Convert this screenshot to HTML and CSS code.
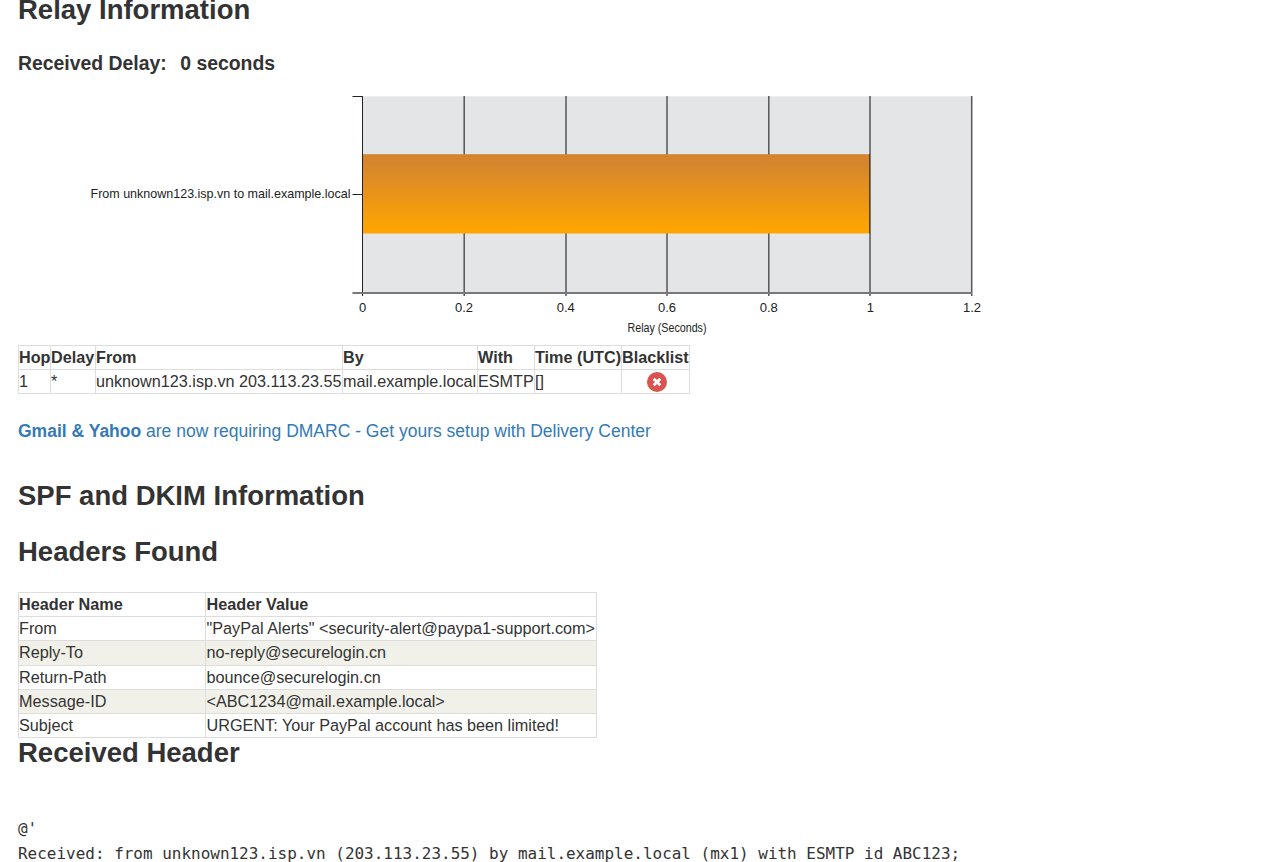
FILE: index.html
```html
<!DOCTYPE html>
<html lang="en">
<head>
<meta charset="utf-8">
<title>Header Analyzed</title>
<link rel="stylesheet" href="styles.css">
</head>
<body>
<main class="report">
  <h2 class="title title-relay">Relay Information</h2>
  <h4 class="delay"><span>Received Delay:</span><span>0 seconds</span></h4>

  <svg class="chart" width="920" height="257" viewBox="80 88 920 257" role="img" aria-label="Relay delay per hop">
    <defs>
      <linearGradient id="bar" x1="0" y1="0" x2="0" y2="1">
        <stop offset="0" stop-color="#d58330"/>
        <stop offset="0.15" stop-color="#d7862c"/>
        <stop offset="0.9" stop-color="#fca304"/>
        <stop offset="1" stop-color="#ffa500"/>
      </linearGradient>
    </defs>
    <rect x="363" y="96.300" width="609" height="196.700" fill="#e4e5e7"/>
    <g class="grid">
      <path d="M464.200 96v200M566 96v200M667 96v200M768.800 96v200M870 96v200M971.700 96v200"/>
    </g>
    <rect x="363" y="154.200" width="506.500" height="79.300" fill="url(#bar)"/>
    <path class="bar-edge" d="M869.500 154v79.500"/>
    <path class="axis" d="M362.500 96v200M352.500 96.500h10M352.500 194.500h10"/>
    <path class="base" d="M352.500 293h619.500"/>
    <g class="tick">
      <text x="362.500" y="311.500">0</text>
      <text x="464" y="311.500">0.2</text>
      <text x="565.800" y="311.500">0.4</text>
      <text x="667" y="311.500">0.6</text>
      <text x="768.800" y="311.500">0.8</text>
      <text x="870.300" y="311.500">1</text>
      <text x="972" y="311.500">1.2</text>
    </g>
    <text class="hop" x="90.500" y="198" textLength="260" lengthAdjust="spacingAndGlyphs">From unknown123.isp.vn to mail.example.local</text>
    <text class="caption" x="627.500" y="332" textLength="79" lengthAdjust="spacingAndGlyphs">Relay (Seconds)</text>
  </svg>

  <table class="grid-table relay">
    <colgroup><col class="c-hop"><col class="c-delay"><col class="c-from"><col class="c-by"><col class="c-with"><col class="c-time"><col class="c-black"></colgroup>
    <tr><th>Hop</th><th>Delay</th><th>From</th><th>By</th><th>With</th><th>Time (UTC)</th><th>Blacklist</th></tr>
    <tr><td>1</td><td>*</td><td>unknown123.isp.vn 203.113.23.55</td><td>mail.example.local</td><td>ESMTP</td><td>[]</td>
      <td class="status"><svg class="bad" width="20" height="20" viewBox="0 0 20 20"><circle cx="10" cy="10" r="10" fill="#d9534f"/><path d="M6.700 6.700l6.600 6.600M13.300 6.700l-6.600 6.600" stroke="#fff" stroke-width="2.800"/></svg></td></tr>
  </table>

  <p class="promo"><a href="#"><b>Gmail &amp; Yahoo</b> are now requiring DMARC - Get yours setup with Delivery Center</a></p>

  <h2 class="title title-spf">SPF and DKIM Information</h2>
  <h2 class="title title-found">Headers Found</h2>

  <table class="grid-table headers">
    <colgroup><col class="c-name"><col class="c-value"></colgroup>
    <tr><th>Header Name</th><th>Header Value</th></tr>
    <tr><td>From</td><td>"PayPal Alerts" &lt;security-alert@paypa1-support.com&gt;</td></tr>
    <tr class="alt tall"><td>Reply-To</td><td>no-reply@securelogin.cn</td></tr>
    <tr><td>Return-Path</td><td>bounce@securelogin.cn</td></tr>
    <tr class="alt"><td>Message-ID</td><td>&lt;ABC1234@mail.example.local&gt;</td></tr>
    <tr><td>Subject</td><td>URGENT: Your PayPal account has been limited!</td></tr>
  </table>

  <h2 class="title title-received">Received Header</h2>
  <pre class="raw">@'
Received: from unknown123.isp.vn (203.113.23.55) by mail.example.local (mx1) with ESMTP id ABC123;</pre>
</main>
</body>
</html>
```
FILE: styles.css
```css
* { box-sizing: border-box; }
body {
  margin: 0;
  height: 862px;
  overflow: hidden;
  background: #fff;
  color: #333;
  font: 16.2px/23px "Liberation Sans", Arial, sans-serif;
}
.report { padding-left: 18px; }
.title { margin: 0; font-size: 27.5px; line-height: 34px; font-weight: bold; white-space: nowrap; }
.title-relay { margin-top: -7px; }
.delay {
  display: flex;
  gap: 13.5px;
  margin: 24px 0 0;
  font-size: 19.4px;
  line-height: 24px;
}
.chart {
  display: block;
  margin: 13px 0 0 62px;
  font-family: "Liberation Sans", Arial, sans-serif;
  fill: #222;
}
.grid path { stroke: #55565a; stroke-width: 1.5; fill: none; }
.axis { stroke: #222; stroke-width: 1; fill: none; }
.base { stroke: #77787a; stroke-width: 2; fill: none; }
.bar-edge { stroke: #5c4218; stroke-width: 1; }
.tick { font-size: 13px; text-anchor: middle; }
.hop { font-size: 13px; }
.caption { font-size: 12px; }
.grid-table { border-collapse: collapse; table-layout: fixed; }
.grid-table tr { height: 24px; }
.grid-table .tall { height: 25px; }
.grid-table th, .grid-table td {
  padding: 0;
  border: 1px solid #ddd;
  text-align: left;
  vertical-align: top;
  white-space: nowrap;
  line-height: 23px;
}
.alt { background: #f1f1e9; }
.relay { width: 672px; }
.c-hop { width: 32px; }
.c-delay { width: 45px; }
.c-from { width: 247px; }
.c-by { width: 135px; }
.c-with { width: 57px; }
.c-time { width: 87px; }
.c-black { width: 68px; }
.relay .status { text-align: center; }
.bad { display: block; margin: 2px auto 1px 25px; }
.promo { margin: 24px 0 0; font-size: 17.5px; line-height: 26px; }
.promo a { color: #337ab7; text-decoration: none; }
.title-spf { margin-top: 35px; }
.title-found { margin-top: 22px; }
.headers { width: 579px; margin-top: 23px; font-size: 16.23px; }
.headers th + th, .headers td + td { padding-left: 0.5px; }
.c-name { width: 187px; }
.c-value { width: 391px; }
.title-received { margin-top: -2px; }
.raw {
  margin: 46px 0 0;
  font: 15.98px/25px "DejaVu Sans Mono", monospace;
}
```
